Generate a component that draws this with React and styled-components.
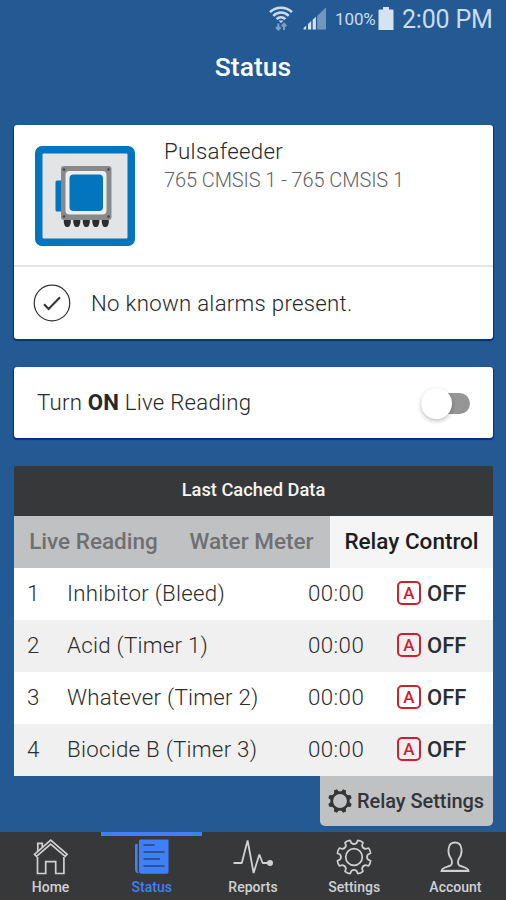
import React, { useState } from 'react';
import styled, { createGlobalStyle } from 'styled-components';

const RELAYS = [
  { id: 1, name: 'Inhibitor (Bleed)', time: '00:00', state: 'OFF' },
  { id: 2, name: 'Acid (Timer 1)', time: '00:00', state: 'OFF' },
  { id: 3, name: 'Whatever (Timer 2)', time: '00:00', state: 'OFF' },
  { id: 4, name: 'Biocide B (Timer 3)', time: '00:00', state: 'OFF' },
];

const NAV_ITEMS = [
  { label: 'Home', Icon: HomeIcon },
  { label: 'Status', Icon: StatusIcon },
  { label: 'Reports', Icon: ReportsIcon },
  { label: 'Settings', Icon: SettingsIcon },
  { label: 'Account', Icon: AccountIcon },
];

export default function App() {
  const [live, setLive] = useState(false);
  const [tab, setTab] = useState('Relay Control');
  const [page, setPage] = useState('Status');

  return (
    <Screen>
      <GlobalStyle />

      <StatusBar>
        <WifiIcon />
        <SignalIcon />
        <Percent>100%</Percent>
        <BatteryIcon />
        <Clock>2:00 PM</Clock>
      </StatusBar>

      <Title>Status</Title>

      <Main>
        <Card>
          <Device>
            <ControllerIcon />
            <div>
              <DeviceName>Pulsafeeder</DeviceName>
              <DeviceInfo>765 CMSIS 1 - 765 CMSIS 1</DeviceInfo>
            </div>
          </Device>
          <Alarm>
            <CheckIcon />
            <AlarmText>No known alarms present.</AlarmText>
          </Alarm>
        </Card>

        <Card>
          <LiveRow>
            <LiveText>
              Turn <b>ON</b> Live Reading
            </LiveText>
            <Toggle
              role="switch"
              aria-checked={live}
              aria-label="Live Reading"
              $on={live}
              onClick={() => setLive(!live)}
            />
          </LiveRow>
        </Card>

        <Table>
          <TableTitle>Last Cached Data</TableTitle>
          <Tabs>
            {['Live Reading', 'Water Meter', 'Relay Control'].map(name => (
              <Tab key={name} $active={name === tab} onClick={() => setTab(name)}>
                {name}
              </Tab>
            ))}
          </Tabs>
          <div>
            {RELAYS.map(relay => (
              <Row key={relay.id}>
                <span>{relay.id}</span>
                <span>{relay.name}</span>
                <Time>{relay.time}</Time>
                <Auto>A</Auto>
                <State>{relay.state}</State>
              </Row>
            ))}
          </div>
          <RelaySettings>
            <CogIcon />
            Relay Settings
          </RelaySettings>
        </Table>
      </Main>

      <Nav>
        {NAV_ITEMS.map(({ label, Icon }) => (
          <NavItem key={label} $active={label === page} onClick={() => setPage(label)}>
            <Icon />
            {label}
          </NavItem>
        ))}
      </Nav>
    </Screen>
  );
}

/** Icons */
function WifiIcon() {
  return (
    <svg width="24" height="25" viewBox="0 0 24 25" fill="none" stroke="#c9dcee" strokeWidth="2.5">
      <path d="M1 6.2C7 .1 17 .1 23 6.2M4.3 9.8C8.6 5.400 15.400 5.400 19.700 9.800M7.600 13.200c2.600-2.700 6.200-2.700 8.800 0" />
      <path d="M9.500 14.400h5L12 17z" fill="#c9dcee" stroke="none" />
      <g stroke="#7f9fc4" strokeWidth="2">
        <path d="M9.300 17.500v6M7 21.200l2.300 2.400 2.300-2.400M15 24v-6M12.700 20.200 15 17.800l2.300 2.400" />
      </g>
    </svg>
  );
}

function SignalIcon() {
  return (
    <svg width="24" height="23" viewBox="0 0 24 23">
      <path d="M14.200 8.800 23 .5V22.500h-8.800z" fill="#6f97c0" />
      <g fill="#d3e3f2">
        <path d="M.6 22.500v-1.600l2.600-2.300v3.900zM5 22.500v-5.600l3.200-2.900v8.500zM9.700 22.500v-9.800l3.200-2.900v12.700z" />
      </g>
    </svg>
  );
}

function BatteryIcon() {
  return (
    <svg width="16" height="24" viewBox="0 0 16 24" fill="#d3e3f2">
      <path d="M5 0h6v2.500h3.500q1 0 1 1V23H.5V3.500q0-1 1-1H5z" />
    </svg>
  );
}

function ControllerIcon() {
  return (
    <svg width="100" height="101" viewBox="0 0 100 101">
      <rect width="100" height="100" rx="7" fill="#0375be" />
      <rect x="7.500" y="7.500" width="85" height="85" rx="1" fill="#e2e4e5" />
      <rect x="20.500" y="34.500" width="8" height="31" rx="1.500" fill="#0375be" />
      <rect x="26" y="20" width="50.500" height="54" rx="3" fill="#88898b" />
      <g fill="#444547">
        <circle cx="29" cy="23.500" r="1.300" />
        <circle cx="73.500" cy="23.500" r="1.300" />
        <circle cx="29" cy="70.500" r="1.300" />
        <circle cx="73.500" cy="70.500" r="1.300" />
      </g>
      <rect x="30.500" y="25" width="41" height="43.500" rx="4" fill="#eceeef" />
      <rect x="34.500" y="28.500" width="33.500" height="36.500" rx="4" fill="#0375be" />
      {[28.8, 38.3, 47.8, 57.3, 66.8].map(x => (
        <path key={x} d={`M${x} 74h7v2.500l-.7 2.500q-.5 2-2.200 2h-1.200q-1.700 0-2.200-2l-.7-2.500z`} fill="#2b2c2e" />
      ))}
    </svg>
  );
}

function CheckIcon() {
  return (
    <svg width="38" height="38" viewBox="0 0 38 38" fill="none" stroke="#333">
      <circle cx="19" cy="19" r="17.800" strokeWidth="1.200" />
      <path d="m11 20.200 4.600 4.800L27 13.300" strokeWidth="2" />
    </svg>
  );
}

function CogIcon() {
  const teeth = [22.5, 67.5, 112.5, 157.5, 202.5, 247.5, 292.5, 337.5];
  return (
    <svg width="24" height="24" viewBox="0 0 24 24">
      <circle cx="12" cy="12" r="8.300" fill="none" stroke="#333538" strokeWidth="2.700" />
      {teeth.map(deg => (
        <path
          key={deg}
          d="M9.300 3.500 10.400 0h3.200l1.100 3.500z"
          transform={`rotate(${deg} 12 12)`}
          fill="#333538"
        />
      ))}
    </svg>
  );
}

function HomeIcon() {
  return (
    <svg width="36" height="36" viewBox="0 0 36 36" fill="none" stroke="currentColor" strokeWidth="1.700">
      <path d="M4.500 18v16.500h8.200V22.700h10V34.500h8.200V18" />
      <path d="M1.500 15.300 17.700 1.200l16.400 14.100-2 2L17.700 5 3.500 17.300z" />
      <path d="M4.800 12.400V4.300h4.500v4.200" />
    </svg>
  );
}

function StatusIcon() {
  return (
    <svg width="36" height="36" viewBox="0 0 36 36">
      <path d="M1 6q0-1 1-1h1.700v26q0 2 1.200 3.500Q1 34 1 30.500z" fill="#3f80f6" />
      <path d="M5 2q0-1.500 1.500-1.500h28V33q0 1.800-1.800 1.800H7.500Q5 34.800 5 32z" fill="#3f80f6" />
      <path d="M9.500 6h11M9.500 13h21M9.500 20h16.500M9.500 27h21" stroke="#26467f" strokeWidth="1.600" />
    </svg>
  );
}

function ReportsIcon() {
  return (
    <svg width="42" height="36" viewBox="0 0 42 36" fill="none" stroke="currentColor" strokeWidth="1.800">
      <path d="M1.500 24h8.300L15.600 1.500l6 32.500 5.700-18.500 3.300 8.500H37" strokeLinejoin="bevel" />
      <circle cx="38" cy="24" r="3" fill="currentColor" stroke="none" />
    </svg>
  );
}

function SettingsIcon() {
  // eight rounded teeth, each drawn as bump + valley
  const point = (r, deg) => {
    const a = (deg * Math.PI) / 180;
    return `${(18 + r * Math.cos(a)).toFixed(2)} ${(18 + r * Math.sin(a)).toFixed(2)}`;
  };
  let d = '';
  for (let i = 0; i < 8; i++) {
    const c = i * 45 + 22.5;
    d += `${i ? 'L' : 'M'}${point(14.2, c - 12)}L${point(17, c - 9.5)}Q${point(17.8, c)} ${point(17, c + 9.5)}`;
    d += `L${point(14.2, c + 12)}Q${point(12, c + 22.5)} ${point(14.2, c + 33)}`;
  }
  return (
    <svg width="36" height="36" viewBox="0 0 36 36" fill="none" stroke="currentColor" strokeWidth="1.700" strokeLinejoin="round">
      <path d={`${d}Z`} />
      <circle cx="18" cy="18" r="8.300" />
    </svg>
  );
}

function AccountIcon() {
  return (
    <svg width="36" height="36" viewBox="0 0 36 36" fill="none" stroke="currentColor" strokeWidth="1.800">
      <path d="M14.500 20.500C10 14.500 10 3.500 18 3.500s8 11 3.500 17c-.8 2.800-.6 5.200 1.200 6.200 3 1.300 8.300 1.400 8.800 5.300h-27c.5-3.900 5.800-4 8.800-5.300 1.800-1 2-3.400 1.200-6.200z" />
      <path d="M4.500 31.800h27" strokeWidth="2" />
    </svg>
  );
}

/** Styled components */
const GlobalStyle = createGlobalStyle`
  * {
    box-sizing: border-box;
  }

  body {
    margin: 0;
    background: #235a94;
    font-family: Roboto, sans-serif;
  }

  button {
    margin: 0;
    padding: 0;
    border: none;
    font-family: inherit;
    cursor: pointer;
  }

  svg {
    display: block;
    flex: none;
  }
`;

const Screen = styled.div`
  display: flex;
  flex-direction: column;
  width: 506px;
  height: 900px;
  background: #235a94;
  overflow: hidden;
`;

const StatusBar = styled.header`
  display: flex;
  align-items: center;
  height: 37px;
  padding: 0 10px 0 269px;
  color: #c9dcee;

  svg:nth-child(2) {
    margin: 0 0 0 10px;
  }
`;

const Percent = styled.span`
  width: 40px;
  margin: 0 3px 0 8px;
  font-size: 17px;
  letter-spacing: -0.1px;
`;

const Clock = styled.span`
  margin-left: 8px;
  padding-top: 2px;
  font-size: 25px;
  letter-spacing: -0.2px;
  white-space: nowrap;
`;

const Title = styled.h1`
  margin: 0;
  height: 88px;
  color: #fff;
  font-size: 26.5px;
  font-weight: 500;
  line-height: 59px;
  text-align: center;
`;

const Main = styled.main`
  display: flex;
  flex: 1;
  flex-direction: column;
  gap: 28px;
  padding: 0 13px 0 14px;
`;

const Card = styled.section`
  background: #fff;
  border-radius: 3px;
  box-shadow: 0 1px 1px 1px #05307c;
  color: #26282a;
`;

const Device = styled.div`
  display: flex;
  gap: 29px;
  height: 140px;
  padding: 21px 21px 0;
`;

const DeviceName = styled.div`
  margin-top: -10px;
  font-size: 22.3px;
  font-weight: 360;
  line-height: 30px;
  letter-spacing: 0.3px;
`;

const DeviceInfo = styled.div`
  color: #606264;
  font-size: 20px;
  font-weight: 300;
  line-height: 28px;
  letter-spacing: -0.1px;
`;

const Alarm = styled.div`
  display: flex;
  align-items: center;
  gap: 20px;
  height: 74px;
  padding-left: 19px;
  border-top: 2px solid #e4e5e6;
`;

const AlarmText = styled.span`
  padding-bottom: 1px;
  font-size: 22.2px;
  font-weight: 360;
  letter-spacing: 0.3px;
`;

const LiveRow = styled.div`
  display: flex;
  justify-content: space-between;
  align-items: center;
  height: 71px;
  padding: 0 23px 0 23px;
`;

const LiveText = styled.span`
  padding-bottom: 1px;
  font-size: 22.2px;
  font-weight: 360;
  letter-spacing: 0.25px;
`;

const Toggle = styled.button`
  display: flex;
  justify-content: ${({ $on }) => ($on ? 'flex-end' : 'flex-start')};
  align-items: center;
  width: 49px;
  height: 21px;
  margin-top: 2px;
  border-radius: 11px;
  background: ${({ $on }) => ($on ? '#3f80f6' : '#969696')};

  &::before {
    content: '';
    width: 31px;
    height: 31px;
    border-radius: 50%;
    background: #fff;
    box-shadow: 0 2px 4px rgba(0, 0, 0, 0.25);
  }
`;

const Table = styled.section`
  margin-bottom: auto;
`;

const TableTitle = styled.h2`
  margin: 0;
  border-radius: 2px 2px 0 0;
  background: #37383a;
  color: #f4f4f4;
  font-size: 18.3px;
  font-weight: 500;
  line-height: 47px;
  height: 50px;
  text-align: center;
`;

const Tabs = styled.div`
  display: grid;
  grid-template-columns: 159px 157px 1fr;
  height: 52px;
  background: #c0c1c3;
`;

const Tab = styled.button`
  padding-bottom: 2px;
  background: ${({ $active }) => ($active ? '#f5f5f6' : 'transparent')};
  color: ${({ $active }) => ($active ? '#1c1d1f' : '#6f7072')};
  font-size: 22.5px;
  font-weight: 500;
  white-space: nowrap;
`;

const Row = styled.div`
  display: grid;
  grid-template-columns: 40px 241px 89px 30px 1fr;
  align-items: center;
  height: 52px;
  padding: 0 13px 2px;
  background: #fff;
  color: #2b2d2f;
  font-size: 22.3px;
  font-weight: 360;
  letter-spacing: 0.25px;
  white-space: nowrap;

  &:nth-child(even) {
    background: #f0f0f1;
  }
`;

const Time = styled.span`
  font-weight: 320;
  letter-spacing: 0.4px;
`;

const Auto = styled.span`
  width: 24px;
  height: 24px;
  border: 2px solid #cf2030;
  border-radius: 5px;
  color: #cf2030;
  font-size: 17px;
  font-weight: 500;
  line-height: 21px;
  letter-spacing: 0;
  text-align: center;
`;

const State = styled.span`
  font-size: 22px;
  font-weight: 500;
  letter-spacing: 0;
`;

const RelaySettings = styled.button`
  display: flex;
  align-items: center;
  gap: 5px;
  width: 173px;
  height: 50px;
  margin-left: auto;
  padding-left: 8px;
  border-radius: 0 0 5px 5px;
  background: #c0c1c3;
  color: #333538;
  font-size: 20px;
  font-weight: 500;
  letter-spacing: -0.05px;
  white-space: nowrap;
`;

const Nav = styled.nav`
  display: grid;
  grid-template-columns: repeat(5, 1fr);
  height: 68px;
  background: #37383a;
`;

const NavItem = styled.button`
  display: flex;
  flex-direction: column;
  align-items: center;
  gap: 4px;
  padding-top: 3px;
  border-top: 4px solid ${({ $active }) => ($active ? '#3f80f6' : 'transparent')};
  background: transparent;
  color: ${({ $active }) => ($active ? '#3f80f6' : '#d0d1d2')};
  font-size: 14px;
  font-weight: 500;
`;
